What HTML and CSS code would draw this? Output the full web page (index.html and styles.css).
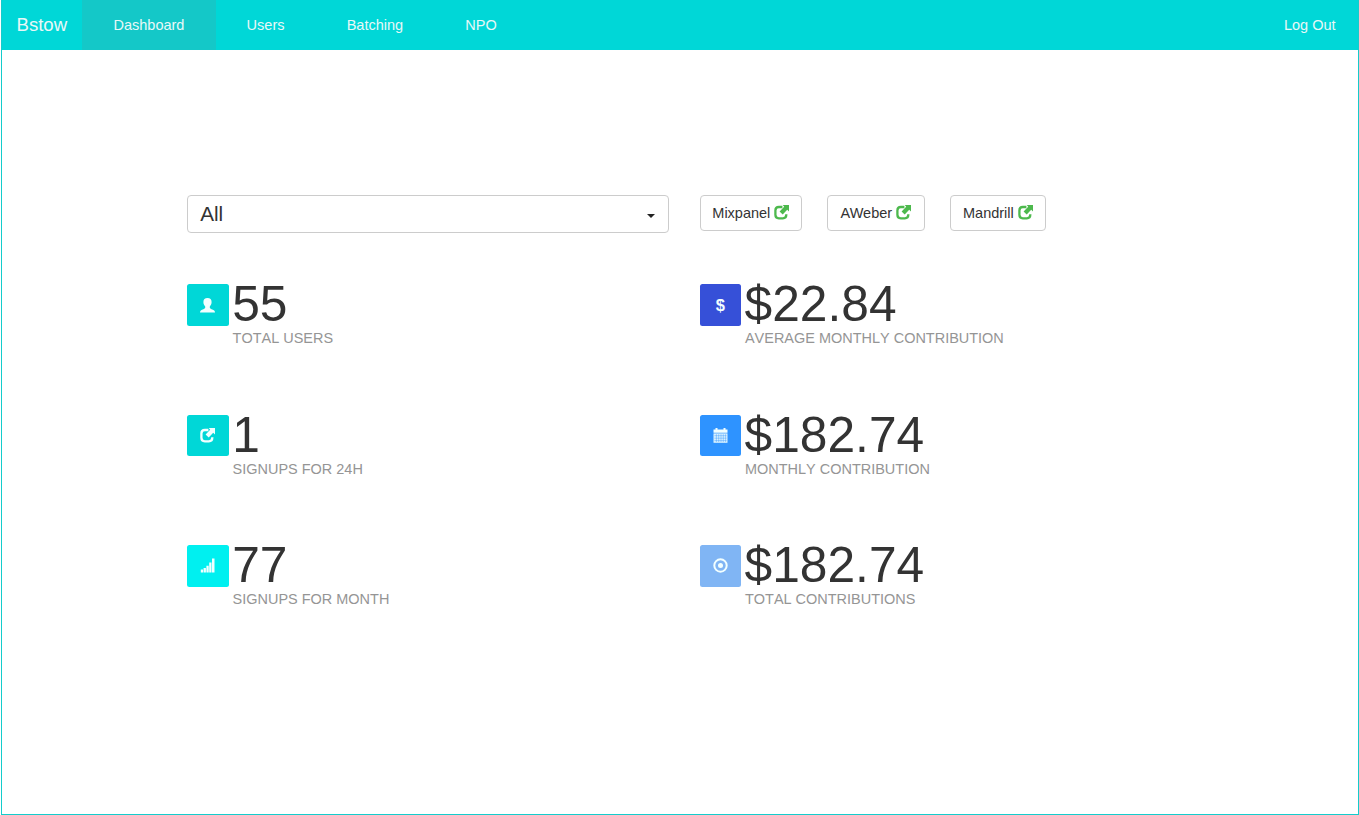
FILE: index.html
```html
<!DOCTYPE html>
<html lang="en">
<head>
<meta charset="utf-8">
<title>Bstow Dashboard</title>
<link rel="stylesheet" href="styles.css">
</head>
<body>
<svg class="symbols" aria-hidden="true">
  <symbol id="share" viewBox="0 0 15 15">
    <path d="M8.4 2H4.8Q1.4 2 1.4 5.4V9.8Q1.4 13.3 4.8 13.3H8.9Q12.3 13.3 12.3 9.8V9.2" fill="none" stroke="currentColor" stroke-width="2.3"/>
    <path d="M8.8 0H15V6.4L13.2 4.8 8.7 9.4 5.6 6.4 10.2 1.8Z" fill="currentColor"/>
  </symbol>
</svg>
<div class="page">
  <nav class="navbar">
    <a class="brand">Bstow</a>
    <a class="nav-item active">Dashboard</a>
    <a class="nav-item">Users</a>
    <a class="nav-item">Batching</a>
    <a class="nav-item">NPO</a>
    <a class="logout">Log Out</a>
  </nav>
  <main class="content">
    <div class="select"><span>All</span><i class="caret"></i></div>
    <div class="buttons">
      <a class="btn mixpanel">Mixpanel <svg><use href="#share"/></svg></a>
      <a class="btn aweber">AWeber <svg><use href="#share"/></svg></a>
      <a class="btn mandrill">Mandrill <svg><use href="#share"/></svg></a>
    </div>
    <section class="stat">
      <div class="icon teal"><svg viewBox="0 0 15 15"><path d="M7.5.1C10.2.1 11.6 1.7 11.6 4.1 11.6 6.2 10.8 7.4 9.8 8.4V9.7C10 10.9 12.8 11.4 14.2 12.6 14.8 13.1 15 13.8 15 14.6H0C0 13.8.2 13.1.8 12.6 2.2 11.4 5 10.9 5.2 9.7V8.4C4.2 7.4 3.4 6.2 3.4 4.1 3.4 1.7 4.8.1 7.5.1Z" fill="currentColor"/></svg></div>
      <div><div class="value">55</div><div class="label">TOTAL USERS</div></div>
    </section>
    <section class="stat">
      <div class="icon indigo"><span class="dollar">$</span></div>
      <div><div class="value">$22.84</div><div class="label">AVERAGE MONTHLY CONTRIBUTION</div></div>
    </section>
    <section class="stat">
      <div class="icon teal"><svg><use href="#share"/></svg></div>
      <div><div class="value">1</div><div class="label">SIGNUPS FOR 24H</div></div>
    </section>
    <section class="stat">
      <div class="icon blue"><svg viewBox="0 0 15 15"><path d="M.5 1.6H2.5V0H4.5V1.6H10.5V0H12.5V1.6H14.5V4.8H.5Z" fill="currentColor"/><path d="M.5 5.4H14.5V14.8H.5Z" fill="currentColor" opacity=".88"/><path d="M1.4 7.7H13.6M1.4 10.2H13.6M1.4 12.6H13.6M3.4 6.2V14M5.7 6.2V14M8 6.2V14M10.3 6.2V14M12.6 6.2V14" stroke="#2e93ff" stroke-width=".4"/></svg></div>
      <div><div class="value">$182.74</div><div class="label">MONTHLY CONTRIBUTION</div></div>
    </section>
    <section class="stat">
      <div class="icon cyan"><svg viewBox="0 0 15 15"><path d="M.8 11.6H3.1V14.6H.8ZM3.6 10.1H5.9V14.6H3.6ZM6.4 7.7H8.7V14.6H6.4ZM9.2 4.6H11.5V14.6H9.2ZM12 .4H14.5V14.6H12Z" fill="currentColor"/></svg></div>
      <div><div class="value">77</div><div class="label">SIGNUPS FOR MONTH</div></div>
    </section>
    <section class="stat">
      <div class="icon sky"><svg viewBox="0 0 15 15"><circle cx="7.5" cy="7.5" r="6.2" fill="none" stroke="currentColor" stroke-width="2"/><circle cx="7.5" cy="7.5" r="2.5" fill="currentColor"/></svg></div>
      <div><div class="value">$182.74</div><div class="label">TOTAL CONTRIBUTIONS</div></div>
    </section>
  </main>
</div>
</body>
</html>
```
FILE: styles.css
```css
* { box-sizing: border-box; }
body { margin: 0; background: #fff; color: #333; font: 14.5px/20.7px "Liberation Sans", Arial, sans-serif; }
.symbols { display: none; }
.page { height: 815px; margin-left: 1px; border: 1px solid #14cccc; border-top: 0; overflow: hidden; }
.navbar { display: flex; align-items: center; height: 50.4px; margin-left: -1px; background: #00d7d7; color: #e8f8f8; }
.brand { width: 81.4px; padding-left: 15.5px; font-size: 18.6px; }
.nav-item { display: flex; align-items: center; height: 100%; padding: 0 31.1px; }
.active { background: #14c8c8; }
.logout { margin-left: auto; padding-right: 22.5px; }
.content { display: grid; grid-template-columns: 512.4px 512px; grid-template-rows: 89px repeat(3, 130.4px); margin: 145px 0 0 185.2px; }
.select { display: flex; align-items: center; justify-content: space-between; width: 481.5px; height: 37.5px; padding: 0 12px; border: 1.4px solid #ccc; border-radius: 4px; font-size: 20.7px; }
.caret { border: 4.2px solid transparent; border-top-color: #222; border-bottom: 0; margin: 4px .7px 0 0; }
.buttons { display: flex; }
.btn { display: flex; align-items: center; justify-content: center; gap: 4px; height: 35.5px; border: 1.4px solid #ccc; border-radius: 4px; }
.btn svg { width: 15px; height: 15px; color: #4db94d; margin-top: -2px; }
.mixpanel { width: 102.5px; margin-right: 24.7px; }
.aweber { width: 98.2px; margin-right: 24.7px; }
.mandrill { width: 96.5px; }
.stat { display: flex; gap: 4px; white-space: nowrap; }
.icon { display: flex; align-items: center; justify-content: center; width: 41.4px; height: 41.4px; border-radius: 2.5px; color: #f2ffff; }
.icon svg { width: 15px; height: 15px; }
.dollar { font-size: 16.5px; font-weight: bold; }
.teal { background: #00d7d7; }
.indigo { background: #3650d8; }
.blue { background: #2e93ff; }
.cyan { background: #00f0f0; }
.sky { background: #80b5f4; }
.value { font-size: 49.7px; line-height: 41px; margin-left: -.4px; }
.label { margin-top: 3px; color: #959595; font-size: 14.48px; font-kerning: none; }
```
